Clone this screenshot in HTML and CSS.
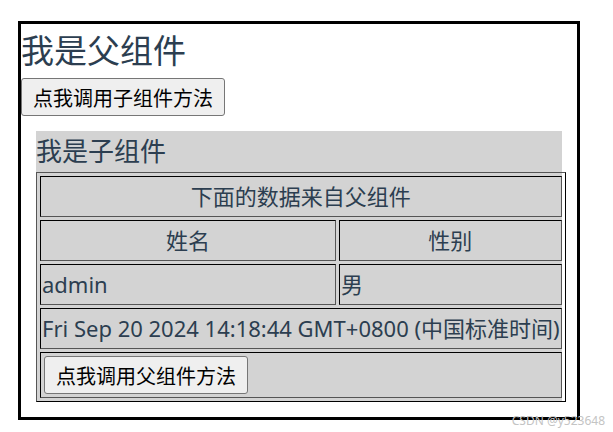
FILE: index.html
```html
<!DOCTYPE html>
<html lang="zh-CN">
<head>
    <meta charset="UTF-8">
    <title>父子组件</title>
    <link rel="stylesheet" href="styles.css">
</head>
<body>

<div class="page">
    <div class="parent">
        <h1>我是父组件</h1>
        <button class="btn">点我调用子组件方法</button>

        <div class="child">
            <h2>我是子组件</h2>
            <table border="1" class="info">
                <tr>
                    <th colspan="2">下面的数据来自父组件</th>
                </tr>
                <tr>
                    <th class="name-col">姓名</th>
                    <th>性别</th>
                </tr>
                <tr>
                    <td>admin</td>
                    <td>男</td>
                </tr>
                <tr>
                    <td colspan="2">Fri Sep 20 2024 14:18:44 GMT+0800 (中国标准时间)</td>
                </tr>
                <tr>
                    <td colspan="2" class="btn-cell"><button class="btn">点我调用父组件方法</button></td>
                </tr>
            </table>
        </div>
    </div>
</div>

<div class="watermark">CSDN @y523648</div>

</body>
</html>
```

FILE: styles.css
```css
body {
    margin: 0;
    font-family: "Noto Sans", "Noto Sans CJK SC", sans-serif;
    color: #2c3e50;
    background-color: #fff;
}

.page {
    padding: 21px 0 0 18px;
}

.parent {
    width: 556px;
    border: 3px solid #000;
}

.parent h1 {
    margin: 0;
    font-size: 33px;
    font-weight: normal;
    line-height: 54px;
}

.btn {
    display: block;
    height: 38px;
    padding: 0 11px;
    margin: 0;
    font-family: "Noto Sans CJK SC", sans-serif;
    font-size: 20px;
    color: #000;
    background-color: #efefef;
    border: 1px solid #767676;
    border-radius: 3px;
}

.child {
    margin: 15px;
    background-color: #d3d3d3;
}

.child h2 {
    margin: 0;
    font-size: 26px;
    font-weight: normal;
    line-height: 41px;
}

.info {
    width: 100%;
    border-spacing: 3px;
    border-color: #555;
    font-size: 22px;
}

.info th,
.info td {
    padding: 1px;
    height: 37px;
    line-height: 37px;
    white-space: nowrap;
}

.info th {
    font-weight: normal;
}

.name-col {
    width: 292px;
}

.btn-cell .btn {
    margin: 2px;
}

.watermark {
    position: absolute;
    right: 8px;
    top: 412px;
    font-size: 12px;
    color: #c4c4c4;
}
```
